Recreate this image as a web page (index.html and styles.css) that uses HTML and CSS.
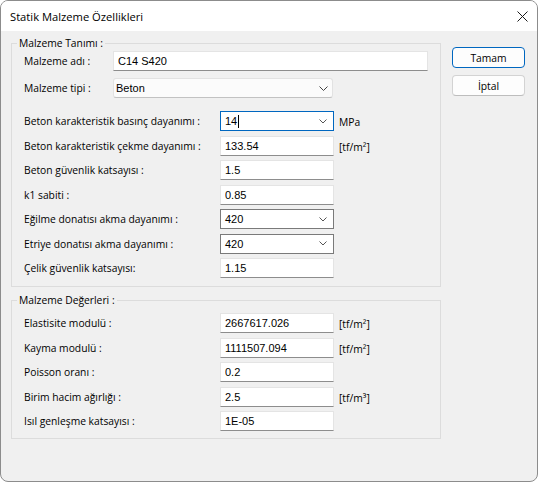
FILE: index.html
```html
<!DOCTYPE html>
<html lang="tr">
<head>
    <meta charset="UTF-8">
    <title>Statik Malzeme Özellikleri</title>
    <link rel="stylesheet" href="styles.css">
</head>
<body>
<div class="window">
    <div class="titlebar">
        <span class="title">Statik Malzeme Özellikleri</span>
        <svg class="close" width="11" height="11" viewBox="0 0 11 11">
            <path d="M0.5 0.5 L10.5 10.5 M10.5 0.5 L0.5 10.5" stroke="#1a1a1a" stroke-width="1" fill="none"/>
        </svg>
    </div>

    <div class="content">
        <div class="groups">
            <fieldset class="group g1">
                <legend>Malzeme Tanımı :</legend>
                <div class="row">
                    <label class="lbl lbl-s">Malzeme adı :</label>
                    <input type="text" class="txt wide" value="C14 S420">
                </div>
                <div class="row r2">
                    <label class="lbl lbl-s">Malzeme tipi :</label>
                    <div class="combo modern mid">
                        <span>Beton</span>
                        <svg class="chev" width="9" height="5" viewBox="0 0 9 5"><path d="M0.5 0.5 L4.5 4.5 L8.5 0.5" stroke="#444" fill="none"/></svg>
                    </div>
                </div>
                <div class="row r3">
                    <label class="lbl lbl-l">Beton karakteristik basınç dayanımı :</label>
                    <div class="combo focus">
                        <span>14<i class="caret"></i></span>
                        <svg class="chev" width="8" height="5" viewBox="0 0 8 5"><path d="M0.5 0.5 L4 4 L7.5 0.5" stroke="#555" fill="none"/></svg>
                    </div>
                    <span class="unit">MPa</span>
                </div>
                <div class="row">
                    <label class="lbl lbl-l">Beton karakteristik çekme dayanımı :</label>
                    <input type="text" class="txt" value="133.54">
                    <span class="unit">[tf/m²]</span>
                </div>
                <div class="row">
                    <label class="lbl lbl-l">Beton güvenlik katsayısı :</label>
                    <input type="text" class="txt" value="1.5">
                </div>
                <div class="row">
                    <label class="lbl lbl-l">k1 sabiti :</label>
                    <input type="text" class="txt" value="0.85">
                </div>
                <div class="row">
                    <label class="lbl lbl-l">Eğilme donatısı akma dayanımı :</label>
                    <div class="combo classic">
                        <span>420</span>
                        <svg class="chev" width="8" height="5" viewBox="0 0 8 5"><path d="M0.5 0.5 L4 4 L7.5 0.5" stroke="#555" fill="none"/></svg>
                    </div>
                </div>
                <div class="row">
                    <label class="lbl lbl-l">Etriye donatısı akma dayanımı :</label>
                    <div class="combo classic">
                        <span>420</span>
                        <svg class="chev" width="8" height="5" viewBox="0 0 8 5"><path d="M0.5 0.5 L4 4 L7.5 0.5" stroke="#555" fill="none"/></svg>
                    </div>
                </div>
                <div class="row">
                    <label class="lbl lbl-l">Çelik güvenlik katsayısı:</label>
                    <input type="text" class="txt" value="1.15">
                </div>
            </fieldset>

            <fieldset class="group g2">
                <legend>Malzeme Değerleri :</legend>
                <div class="row">
                    <label class="lbl lbl-l">Elastisite modulü :</label>
                    <input type="text" class="txt" value="2667617.026">
                    <span class="unit">[tf/m²]</span>
                </div>
                <div class="row">
                    <label class="lbl lbl-l">Kayma modulü :</label>
                    <input type="text" class="txt" value="1111507.094">
                    <span class="unit">[tf/m²]</span>
                </div>
                <div class="row">
                    <label class="lbl lbl-l">Poisson oranı :</label>
                    <input type="text" class="txt" value="0.2">
                </div>
                <div class="row">
                    <label class="lbl lbl-l">Birim hacim ağırlığı :</label>
                    <input type="text" class="txt" value="2.5">
                    <span class="unit">[tf/m³]</span>
                </div>
                <div class="row">
                    <label class="lbl lbl-l">Isıl genleşme katsayısı :</label>
                    <input type="text" class="txt" value="1E-05">
                </div>
            </fieldset>
        </div>

        <div class="buttons">
            <button class="btn default">Tamam</button>
            <button class="btn">İptal</button>
        </div>
    </div>
</div>
</body>
</html>
```

FILE: styles.css
```css
*{
    box-sizing: border-box;
    margin: 0;
}
body{
    background-color: #fff;
    font-family: "Segoe UI", "Open Sans", sans-serif;
    font-size: 10.3px;
    color: #000;
}
.window{
    width: 538px;
    height: 482px;
    border: 1px solid #8c8c8c;
    border-radius: 8px;
    overflow: hidden;
    background-color: #f0f0f0;
    display: flex;
    flex-direction: column;
}

/* title bar */
.titlebar{
    height: 30px;
    background-color: #fff;
    display: flex;
    align-items: center;
    padding-left: 9px;
    flex-shrink: 0;
}
.title{
    font-size: 11.2px;
}
.close{
    margin-left: auto;
    margin-right: 9px;
    margin-top: 1px;
}

.content{
    display: flex;
    padding: 4px 0 0 10px;
}
.groups{
    width: 430px;
}

/* group boxes */
.group{
    border: 1px solid #dcdcdc;
    padding: 0 12px 8px 12px;
    min-width: 0;
}
.group legend{
    line-height: 16px;
    padding: 0 2px;
    margin-left: -7px;
}
.g2{
    margin-top: 5px;
    padding-top: 5px;
    padding-bottom: 7px;
}

.row{
    display: flex;
    align-items: center;
    height: 20px;
    margin-top: 4.5px;
}
.row:first-of-type{
    margin-top: 0;
}
.g1 .row:first-of-type{
    margin-top: 0;
}
.row.r2{
    margin-top: 7px;
}
.row.r3{
    margin-top: 13px;
}
.lbl{
    flex-shrink: 0;
    white-space: nowrap;
}
.lbl-s{
    width: 89px;
}
.lbl-l{
    width: 196px;
}

/* text boxes */
.txt{
    width: 114px;
    height: 20px;
    padding: 0 4px;
    border: 1px solid #e4e4e4;
    border-bottom-color: #8d8d8d;
    background-color: #fff;
    font-family: Tahoma, "Liberation Sans", sans-serif;
    font-size: 11px;
    color: #000;
    outline: none;
}
.txt.wide{
    width: 315px;
}

/* combo boxes */
.combo{
    width: 114px;
    height: 20px;
    display: flex;
    align-items: center;
    justify-content: space-between;
    padding: 0 6px 0 4px;
    font-family: Tahoma, "Liberation Sans", sans-serif;
    font-size: 11px;
    background-color: #fff;
}
.combo.classic{
    border: 1px solid #7a7a7a;
}
.combo.focus{
    border: 1px solid #0067c0;
}
.combo.modern{
    border: 1px solid #e2e2e2;
    border-bottom-color: #c2c2c2;
    background-color: #fbfbfb;
    padding: 0 4px 0 2px;
    border-radius: 3px;
}
.combo.mid{
    width: 220px;
}
.chev{
    display: block;
}
.caret{
    display: inline-block;
    width: 1px;
    height: 13px;
    background-color: #000;
    margin-left: 1px;
    vertical-align: -3px;
}
.unit{
    margin-left: 5px;
    margin-top: 2px;
}

/* buttons */
.buttons{
    display: flex;
    flex-direction: column;
    margin-left: 11px;
    margin-top: 12px;
}
.btn{
    width: 73px;
    height: 21px;
    margin-bottom: 7px;
    border: 1px solid #d3d3d3;
    border-bottom-color: #bdbdbd;
    border-radius: 4px;
    background-color: #fdfdfd;
    font-family: "Segoe UI", "Open Sans", sans-serif;
    font-size: 10.3px;
    color: #000;
    padding: 0;
}
.btn.default{
    border: 1px solid #0067c0;
}
```
